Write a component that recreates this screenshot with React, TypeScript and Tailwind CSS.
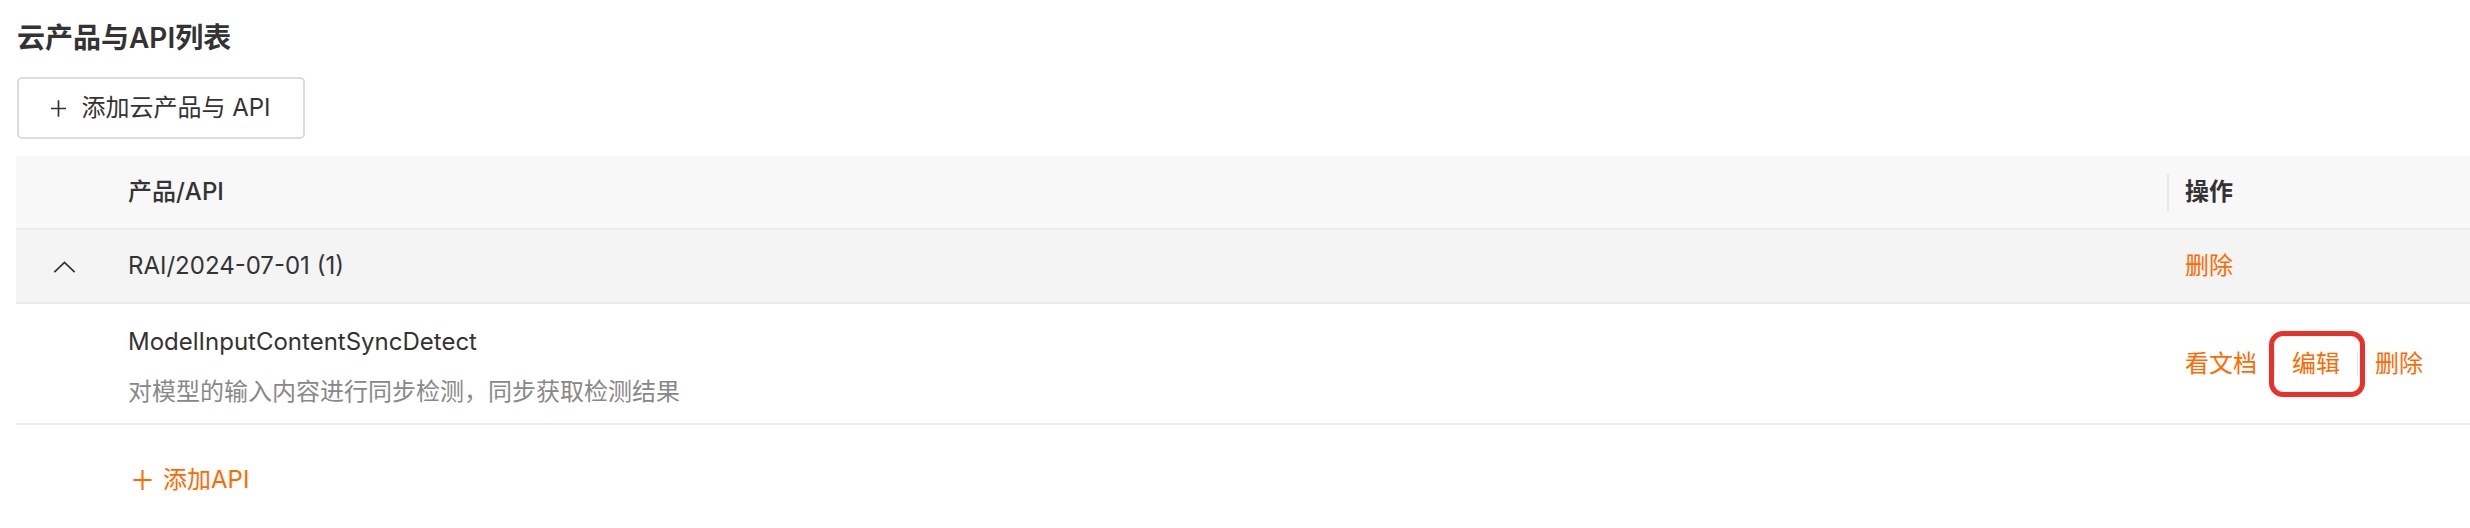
import React from 'react';

const FONT = { fontFamily: 'Inter, "Noto Sans CJK SC", sans-serif' };

function PlusIcon({ className }: { className?: string }) {
  return (
    <svg viewBox="0 0 18 22" className={className} fill="none" stroke="currentColor" strokeWidth={2}>
      <path d="M9 1v20M0 11h18" />
    </svg>
  );
}

function ChevronUp() {
  return (
    <svg viewBox="0 0 24 13" className="w-[23px] h-[12px] text-[#333]" fill="none" stroke="currentColor" strokeWidth={1.9}>
      <path d="M1 12L12 1.5L23 12" />
    </svg>
  );
}

const api = {
  name: 'ModelInputContentSyncDetect',
  desc: '对模型的输入内容进行同步检测，同步获取检测结果',
};

export default function App() {
  return (
    <div className="min-h-screen bg-white pl-4 text-[#333]" style={FONT}>
      {/* Title */}
      <div className="pt-[18px] pl-px text-[28px] leading-[40px] font-semibold text-[#333]">
        云产品与API列表
      </div>

      {/* Add product button */}
      <button className="mt-[19px] ml-px flex h-[62px] w-[288px] items-center justify-center gap-[15px] rounded-[5px] border-2 border-[#dcdcdc] bg-white text-[24px] text-[#333]">
        <PlusIcon className="w-[15px] h-[19px]" />
        <span>添加云产品与 API</span>
      </button>

      {/* Table */}
      <div className="mt-[17px]">
        {/* Header */}
        <div className="flex h-[74px] items-center border-b-2 border-[#ebebeb] bg-[#f8f8f8] text-[24px]">
          <div className="w-[112px]" />
          <div className="flex-1 font-medium">产品/API</div>
          <div className="flex w-[303px] items-center">
            <span className="h-[37px] w-[2px] bg-[#e6e6e6]" />
            <span className="ml-4 font-semibold">操作</span>
          </div>
        </div>

        {/* Group row */}
        <div className="flex h-[74px] items-center border-b-2 border-[#ebebeb] bg-[#f4f4f4] text-[24px]">
          <div className="w-[112px] pl-[37px] pt-[1px]">
            <ChevronUp />
          </div>
          <div className="flex-1">RAI/2024-07-01 (1)</div>
          <div className="w-[303px] pl-[18px]">
            <a className="text-[#ff6a00]">删除</a>
          </div>
        </div>

        {/* API row */}
        <div className="flex h-[121px] border-b-2 border-[#ebebeb] text-[24px]">
          <div className="w-[112px]" />
          <div className="flex-1 pt-[20px]">
            <div className="leading-[36px] text-[#333]">{api.name}</div>
            <div className="mt-[14px] leading-[36px] text-[#888]">{api.desc}</div>
          </div>
          <div className="flex w-[303px] items-center pl-[18px] leading-[36px] text-[#ff6a00]">
            <a>看文档</a>
            <span className="mx-[17px] h-[25px] w-px bg-[#e6e6e6]" />
            <a className="relative block">
              编辑
              <span className="absolute -left-[23px] -right-[25px] -top-[15px] -bottom-[15px] rounded-[14px] border-[5px] border-[#e8312b]" />
            </a>
            <span className="mx-[17px] h-[25px] w-px bg-[#e6e6e6]" />
            <a>删除</a>
          </div>
        </div>
      </div>

      {/* Add API */}
      <div className="mt-[37px] flex items-center gap-[11px] pl-[117px] text-[24px] leading-[36px] text-[#ff6a00]">
        <PlusIcon className="w-[19px] h-[22px]" />
        <span>添加API</span>
      </div>
    </div>
  );
}
